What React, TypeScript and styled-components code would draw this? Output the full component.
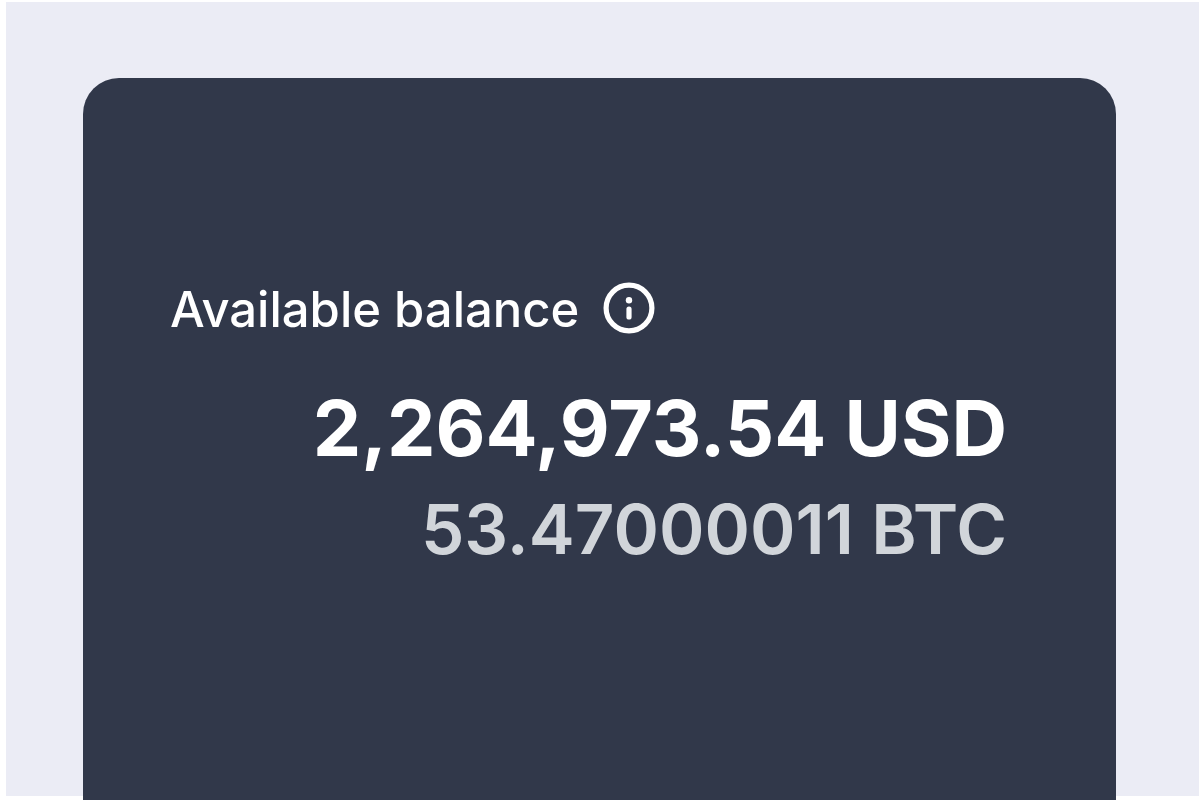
import React from "react";
import styled, { createGlobalStyle } from "styled-components";

const GlobalStyle = createGlobalStyle`
  * { box-sizing: border-box; }
  body {
    margin: 0;
    background: #ffffff;
    font-family: Inter, "Liberation Sans", sans-serif;
  }
`;

const Frame = styled.div`
  display: flex;
  height: 100vh;
  padding: 2px 1px 4px 6px;
`;

const Backdrop = styled.main`
  flex: 1;
  padding: 76px 83px 0 77px;
  background: #ebecf5;
`;

const Card = styled.section`
  height: calc(100% + 4px);
  padding: 194px 109px 0 87px;
  border-radius: 36px 36px 0 0;
  background: #31384a;
  color: #ffffff;
`;

const Heading = styled.header`
  display: flex;
  align-items: center;
  gap: 24px;
`;

const Title = styled.h1`
  margin: 0;
  font-size: 49px;
  font-weight: 450;
  line-height: 76px;
`;

const InfoButton = styled.button`
  display: flex;
  padding: 0;
  border: 0;
  background: none;
  color: inherit;
`;

const Amount = styled.p`
  margin: 0;
  padding-top: 28px;
  text-align: right;
  font-size: 77px;
  font-weight: 700;
  line-height: 104px;
  white-space: nowrap;
`;

const Converted = styled.p`
  margin: 0;
  text-align: right;
  font-size: 69px;
  font-weight: 600;
  line-height: 98px;
  white-space: nowrap;
  color: #d1d5da;
`;

export default function App() {
  return (
    <>
      <GlobalStyle />
      <Frame>
        <Backdrop>
          <Card>
            <Heading>
              <Title>Available balance</Title>
              <InfoButton type="button" aria-label="About available balance">
                <svg width="52" height="56" viewBox="0 0 52 56" fill="none" stroke="currentColor">
                  <circle cx="26" cy="26" r="22.9" strokeWidth="5.2" />
                  <path d="M26 27v8" strokeWidth="5.2" strokeLinecap="round" />
                  <circle cx="26" cy="18.2" r="3.2" fill="currentColor" stroke="none" />
                </svg>
              </InfoButton>
            </Heading>
            <Amount>2,264,973.54 USD</Amount>
            <Converted>53.47000011 BTC</Converted>
          </Card>
        </Backdrop>
      </Frame>
    </>
  );
}
